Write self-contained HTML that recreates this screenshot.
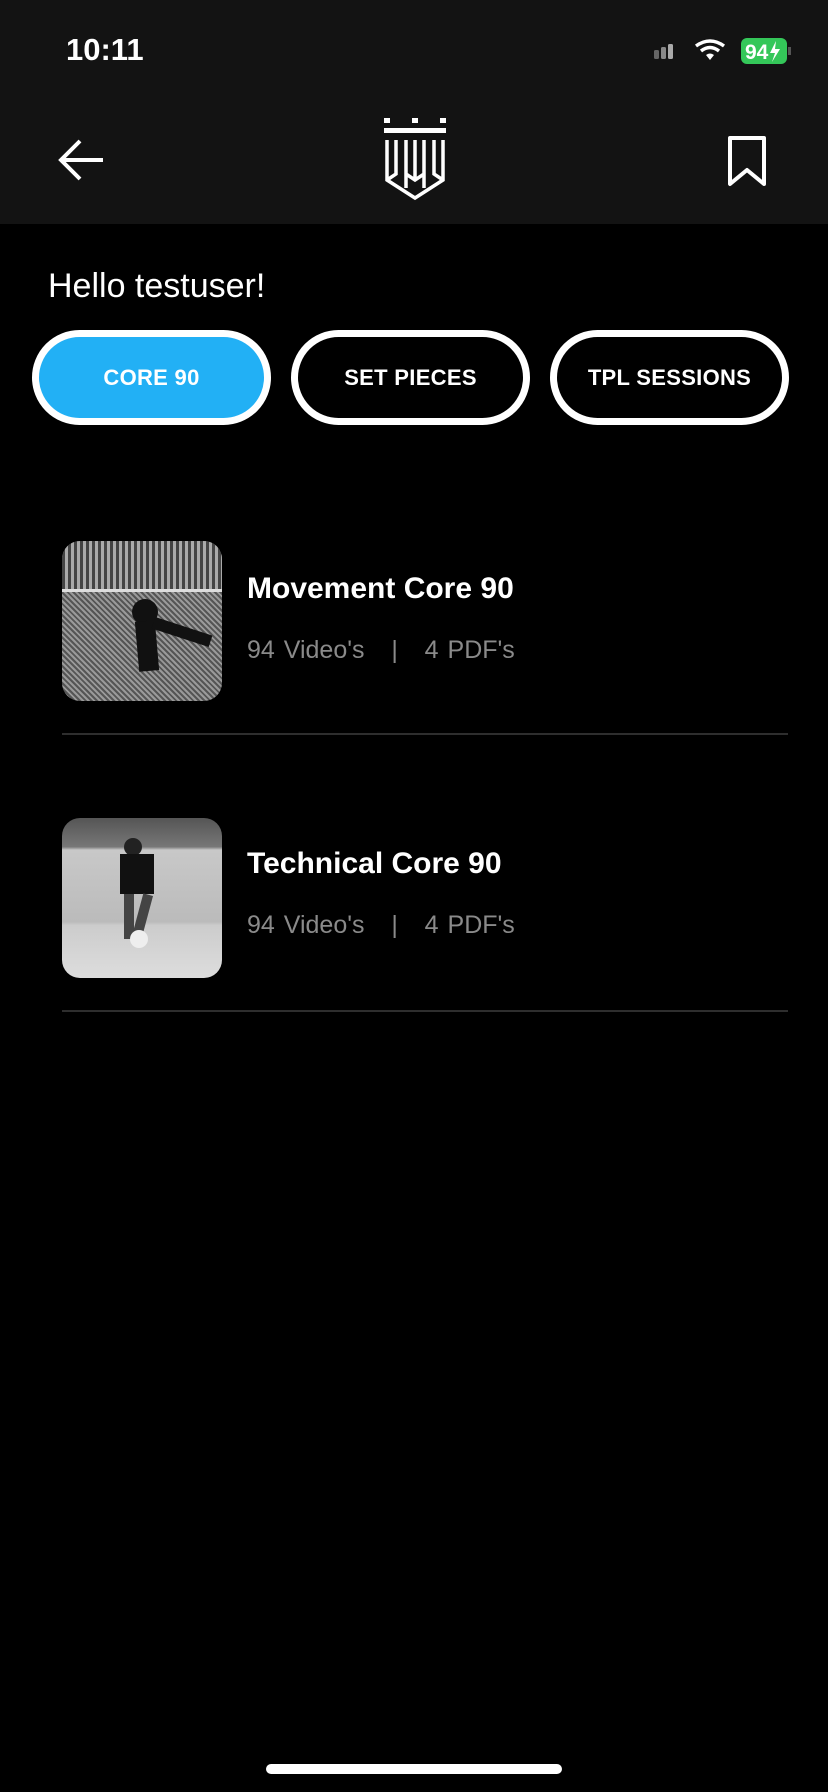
<!DOCTYPE html>
<html><head><meta charset="utf-8"><style>
*{margin:0;padding:0;box-sizing:border-box}
body{width:828px;height:1792px;background:#000;font-family:"Liberation Sans",sans-serif;color:#fff;position:relative;overflow:hidden}
.hdr{position:absolute;left:0;top:0;width:828px;height:224px;background:#131313}
.abs{position:absolute}
.pill{position:absolute;top:330px;width:239px;height:95px;border:7px solid #fff;border-radius:48px;display:flex;align-items:center;justify-content:center;font-weight:bold;font-size:22px;letter-spacing:0.3px}
.thumb{position:absolute;left:62px;width:160px;height:160px;border-radius:18px;overflow:hidden}
.title{position:absolute;left:247px;font-weight:bold;font-size:30px}
.sub{position:absolute;left:247px;font-size:25px;color:#8a8a8a;word-spacing:2px}
.div{position:absolute;left:62px;width:726px;height:2px;background:#2e2e2e}
</style></head><body>
<div class="hdr"></div>
<div class="abs" style="left:66px;top:32px;font-size:31px;font-weight:bold">10:11</div>
<svg class="abs" style="left:652px;top:38px" width="140" height="28" viewBox="0 0 140 28">
<rect x="2" y="12" width="5" height="9" rx="1.5" fill="#666"/><rect x="9" y="9" width="5" height="12" rx="1.5" fill="#888"/><rect x="16" y="6" width="5" height="15" rx="1.5" fill="#aaa"/>
<path d="M44 8 Q58 -2 72 8" stroke="#fff" stroke-width="3.5" fill="none"/><path d="M49 13 Q58 6 67 13" stroke="#fff" stroke-width="3.5" fill="none"/><path d="M54 17 L58 22 L62 17 Q58 14 54 17Z" fill="#fff"/>
<rect x="89" y="0" width="46" height="26" rx="6" fill="#34c759"/><rect x="136" y="9" width="3" height="8" fill="#555"/>
<text x="93" y="21" font-size="21" font-weight="bold" fill="#fff" font-family="Liberation Sans">94</text><path d="M124 3 L118 15 L123 15 L120 24 L128 11 L123 11Z" fill="#fff"/>
</svg>
<svg class="abs" style="left:58px;top:138px" width="48" height="44" viewBox="0 0 48 44"><path d="M45 22 H4 M22 3 L3 22 L22 41" stroke="#fff" stroke-width="4" fill="none"/></svg>
<svg class="abs" style="left:384px;top:118px" width="62" height="84" viewBox="0 0 62 84">
<g fill="#fff"><rect x="0" y="0" width="6" height="5"/><rect x="28" y="0" width="6" height="5"/><rect x="56" y="0" width="6" height="5"/><rect x="0" y="10" width="62" height="5"/></g>
<path d="M3 22 V62 L31 80 L59 62 V22 M3 62 L12 56 V22 M59 62 L50 56 V22 M22 22 V70 M40 22 V70 M22 56 L31 62 L40 56 M31 22 V60" stroke="#fff" stroke-width="3.5" fill="none"/>
</svg>
<svg class="abs" style="left:726px;top:134px" width="42" height="56" viewBox="0 0 42 56"><path d="M4 4 H38 V50 L21 36 L4 50Z" stroke="#fff" stroke-width="4" fill="none" stroke-linejoin="round"/></svg>
<div class="abs" style="left:48px;top:267px;font-size:34px">Hello testuser!</div>
<div class="pill" style="left:32px;background:#22b0f5">CORE 90</div>
<div class="pill" style="left:291px">SET PIECES</div>
<div class="pill" style="left:550px">TPL SESSIONS</div>
<div class="thumb" style="top:541px;background:repeating-linear-gradient(45deg,#555 0 2px,#999 2px 4px),#777">
<div class="abs" style="left:0;top:0;width:160px;height:50px;background:repeating-linear-gradient(90deg,#444 0 3px,#aaa 3px 6px)"></div>
<div class="abs" style="left:0;top:48px;width:160px;height:3px;background:#ddd"></div>
<div class="abs" style="left:70px;top:58px;width:26px;height:26px;border-radius:50%;background:#111"></div>
<div class="abs" style="left:75px;top:80px;width:20px;height:50px;background:#111;transform:rotate(-5deg)"></div>
<div class="abs" style="left:90px;top:85px;width:60px;height:12px;background:#111;transform:rotate(18deg)"></div>
</div>
<div class="title" style="top:572px">Movement Core 90</div>
<div class="sub" style="top:636px">94 Video's &nbsp;&nbsp;| &nbsp;&nbsp;4 PDF's</div>
<div class="div" style="top:733px"></div>
<div class="thumb" style="top:818px;background:linear-gradient(180deg,#555 0%,#777 18%,#c8c8c8 20%,#bbb 65%,#ccc 67%,#ddd 100%)">
<div class="abs" style="left:62px;top:20px;width:18px;height:18px;border-radius:50%;background:#222"></div>
<div class="abs" style="left:58px;top:36px;width:34px;height:40px;background:#111"></div>
<div class="abs" style="left:62px;top:76px;width:10px;height:45px;background:#444"></div>
<div class="abs" style="left:76px;top:76px;width:10px;height:40px;background:#444;transform:rotate(15deg)"></div>
<div class="abs" style="left:68px;top:112px;width:18px;height:18px;border-radius:50%;background:#eee"></div>
</div>
<div class="title" style="top:847px">Technical Core 90</div>
<div class="sub" style="top:911px">94 Video's &nbsp;&nbsp;| &nbsp;&nbsp;4 PDF's</div>
<div class="div" style="top:1010px"></div>
<div class="abs" style="left:266px;top:1764px;width:296px;height:10px;border-radius:5px;background:#fff"></div>
</body></html>
